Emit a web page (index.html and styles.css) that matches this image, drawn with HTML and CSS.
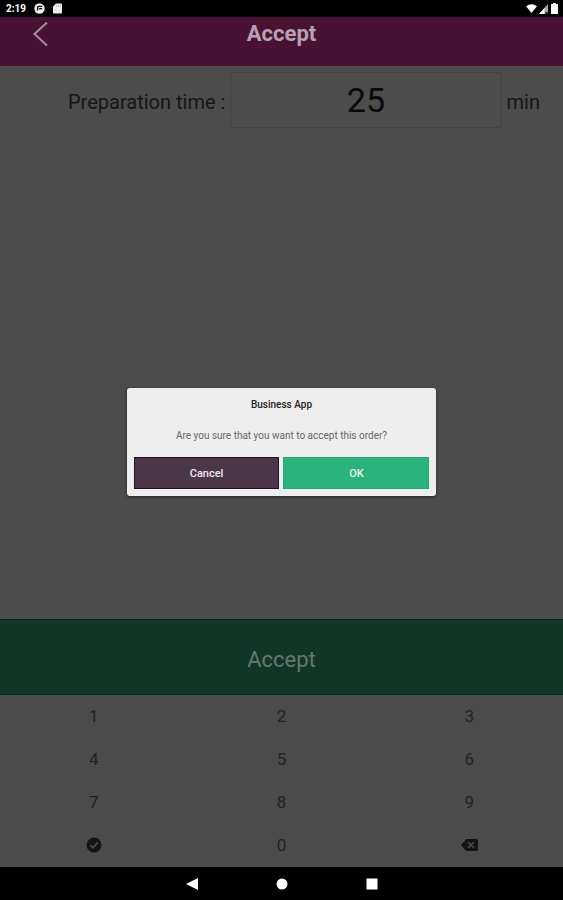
FILE: index.html
```html
<!DOCTYPE html>
<html lang="en">
<head>
    <meta charset="UTF-8">
    <meta name="viewport" content="width=device-width, initial-scale=1.0">
    <title>Business App</title>
    <link rel="stylesheet" href="styles.css">
</head>
<body>
    <div class="status-bar">
        <span class="clock">2:19</span>
        <svg width="11" height="11" viewBox="0 0 11 11"><circle cx="5.5" cy="5.5" r="5.2" fill="#eee"/><path d="M3.6 7.4V4.6q0-1.2 1.2-1.2h3.4M5.8 6.6V5.6h2.4" fill="none" stroke="#111" stroke-width="1.4"/></svg>
        <svg width="9" height="11" viewBox="0 0 9 11"><path d="M3 .5h5q1 0 1 1v8q0 1-1 1H1q-1 0-1-1V3.5z" fill="#eee"/><path d="M3.5 2v2M5.5 2v2M7.3 2v2" stroke="#aaa" stroke-width=".7"/></svg>
        <div class="status-right">
            <svg width="11" height="9" viewBox="0 0 11 9"><path d="M0 2.2Q5.5-1.8 11 2.2L5.5 9z" fill="#fff"/></svg>
            <svg width="10" height="10" viewBox="0 0 10 10"><path d="M0 10L9 0v10z" fill="#aaa"/><path d="M0 10L5.5 4v6z" fill="#fff"/><path d="M6 8l3 2M9 8l-3 2" stroke="#222"/></svg>
            <svg width="7" height="11" viewBox="0 0 7 11"><path d="M2 0h3v1h2v10H0V1h2z" fill="#fff"/></svg>
        </div>
    </div>

    <div class="screen">
        <header class="header">
            <button class="back" aria-label="Back">
                <svg width="15" height="26" viewBox="0 0 15 26"><path d="M14 1.5L1.5 13 14 24.5" fill="none" stroke="#a08fa0" stroke-width="2"/></svg>
            </button>
            <h1>Accept</h1>
        </header>

        <main class="content">
            <div class="time-row">
                <label for="prepTime">Preparation time :</label>
                <input id="prepTime" type="text" value="25">
                <span>min</span>
            </div>
        </main>

        <button class="accept">Accept</button>

        <div class="keypad">
            <button>1</button>
            <button>2</button>
            <button>3</button>
            <button>4</button>
            <button>5</button>
            <button>6</button>
            <button>7</button>
            <button>8</button>
            <button>9</button>
            <button aria-label="Done">
                <svg width="16" height="16" viewBox="0 0 16 16"><circle cx="8" cy="8" r="7.5" fill="#141414"/><path d="M4.3 8.2l2.6 2.6 5-5.4" fill="none" stroke="#4b4b4b" stroke-width="1.8"/></svg>
            </button>
            <button>0</button>
            <button aria-label="Delete">
                <svg width="17" height="12" viewBox="0 0 17 12"><path d="M5.2 0H15.5Q17 0 17 1.5v9Q17 12 15.5 12H5.2L0 6z" fill="#141414"/><path d="M7 3l6 6M13 3L7 9" stroke="#4b4b4b" stroke-width="1.6"/></svg>
            </button>
        </div>

        <div class="overlay">
            <div class="dialog" role="dialog" aria-labelledby="dialogTitle">
                <h2 id="dialogTitle">Business App</h2>
                <p>Are you sure that you want to accept this order?</p>
                <div class="dialog-buttons">
                    <button class="cancel">Cancel</button>
                    <button class="ok">OK</button>
                </div>
            </div>
        </div>
    </div>

    <nav class="nav-bar">
        <button aria-label="Back"><svg width="12" height="12" viewBox="0 0 12 12"><path d="M12 0v12L0 6z" fill="#fff"/></svg></button>
        <button aria-label="Home"><svg width="12" height="12" viewBox="0 0 12 12"><circle cx="6" cy="6" r="5.5" fill="#fff"/></svg></button>
        <button aria-label="Recent apps"><svg width="12" height="12" viewBox="0 0 12 12"><path d="M.5 .5h11v11H.5z" fill="#fff"/></svg></button>
    </nav>
</body>
</html>
```
FILE: styles.css
```css
* {
    box-sizing: border-box;
}

body {
    display: flex;
    flex-direction: column;
    min-height: 100vh;
    margin: 0;
    background-color: #000;
    font-family: Roboto, "Liberation Sans", sans-serif;
}

button {
    display: flex;
    align-items: center;
    justify-content: center;
    padding: 0;
    border: none;
    background: none;
    font-family: inherit;
}

.status-bar {
    display: flex;
    align-items: center;
    gap: 8px;
    height: 17px;
    padding: 0 5px 0 6px;
}

.clock {
    color: #fff;
    font-size: 10px;
    font-weight: bold;
}

.status-right {
    display: flex;
    align-items: center;
    gap: 2px;
    margin-left: auto;
}

.screen {
    position: relative;
    flex: 1;
    display: flex;
    flex-direction: column;
    background-color: #4c4c4c;
}

.header {
    display: grid;
    grid-template-columns: 48px 1fr 48px;
    padding: 3px 0 18px;
    background-color: #4a1232;
}

.back {
    justify-content: flex-end;
}

.header h1 {
    margin: 0;
    color: #b3a3b0;
    font-size: 22px;
    font-weight: bold;
    line-height: 28px;
    text-align: center;
}

.content {
    flex: 1;
}

.time-row {
    display: flex;
    align-items: center;
    gap: 5px;
    padding: 6px 23px 7px 68px;
    color: #161616;
    font-size: 20px;
}

.time-row label,
.time-row span {
    padding-top: 4px;
}

.time-row input {
    flex: 1;
    min-width: 0;
    height: 56px;
    padding: 0;
    border: 1px solid #424242;
    border-radius: 2px;
    background: none;
    color: #0a0a0a;
    font-family: inherit;
    font-size: 34px;
    text-align: center;
}

.accept {
    height: 76px;
    padding-top: 5px;
    border-top: 1px solid #082418;
    border-bottom: 1px solid #052e1c;
    background-color: #113627;
    color: #66766e;
    font-size: 22px;
}

.keypad {
    display: grid;
    grid-template-columns: repeat(3, 1fr);
    grid-auto-rows: 43px;
    background-color: #4b4b4b;
}

.keypad button {
    padding-bottom: 1px;
    border-bottom: 1px solid #494949;
    color: #222;
    font-size: 17px;
}

.overlay {
    position: absolute;
    inset: 0;
    display: flex;
    align-items: center;
    justify-content: center;
}

.dialog {
    width: 55%;
    padding: 9px 7px 7px;
    border-radius: 3px;
    background-color: #eee;
    box-shadow: 0 1px 3px #222;
    text-align: center;
}

.dialog h2 {
    margin: 0 0 16px;
    color: #222;
    font-size: 10px;
    font-weight: 500;
    line-height: 15px;
}

.dialog p {
    margin: 0 0 14px;
    color: #666;
    font-size: 10px;
    line-height: 15px;
}

.dialog-buttons {
    display: grid;
    grid-template-columns: 1fr 1fr;
    gap: 4px;
}

.dialog-buttons button {
    height: 32px;
    color: #eee;
    font-size: 11px;
    font-weight: 500;
}

.cancel {
    border: 1px solid #2c0a2a;
    background-color: #4c364a;
}

.ok {
    border: 1px solid #1fa870;
    background-color: #2bb37e;
}

.nav-bar {
    display: flex;
    align-items: center;
    justify-content: center;
    gap: 78px;
    height: 33px;
}
```
